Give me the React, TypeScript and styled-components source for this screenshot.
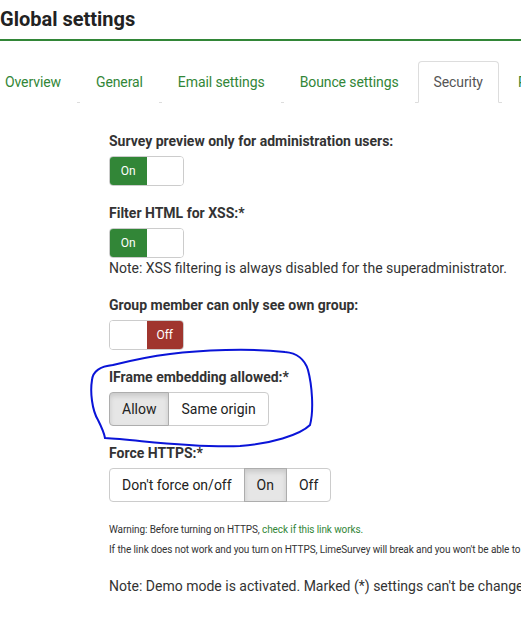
import React from 'react';
import styled, { createGlobalStyle } from 'styled-components';

const GlobalStyle = createGlobalStyle`
  body {
    margin: 0;
    background: #fff;
    font-family: Roboto, "Liberation Sans", sans-serif;
    color: #333;
  }
`;

const tabs = ['Overview', 'General', 'Email settings', 'Bounce settings', 'Security', 'Presentation'];

export default function App() {
  return (
    <Page>
      <GlobalStyle />
      <Header>Global settings</Header>
      <Tabs>
        {tabs.map((t) => (
          <Tab key={t} $active={t === 'Security'}>
            {t}
          </Tab>
        ))}
      </Tabs>
      <Content>
        <Field>
          <Label>Survey preview only for administration users:</Label>
          <Toggle>
            <ToggleHalf $state="on">On</ToggleHalf>
            <ToggleHalf />
          </Toggle>
        </Field>
        <Field>
          <Label>Filter HTML for XSS:*</Label>
          <Toggle>
            <ToggleHalf $state="on">On</ToggleHalf>
            <ToggleHalf />
          </Toggle>
          <Note>Note: XSS filtering is always disabled for the superadministrator.</Note>
        </Field>
        <Field>
          <Label>Group member can only see own group:</Label>
          <Toggle>
            <ToggleHalf />
            <ToggleHalf $state="off">Off</ToggleHalf>
          </Toggle>
        </Field>
        <Field>
          <Label>IFrame embedding allowed:*</Label>
          <ButtonGroup>
            <GroupButton $active>Allow</GroupButton>
            <GroupButton>Same origin</GroupButton>
          </ButtonGroup>
        </Field>
        <Field>
          <Label>Force HTTPS:*</Label>
          <ButtonGroup>
            <GroupButton>Don't force on/off</GroupButton>
            <GroupButton $active>On</GroupButton>
            <GroupButton>Off</GroupButton>
          </ButtonGroup>
        </Field>
        <Warning>
          <SmallText>
            Warning: Before turning on HTTPS, <GreenLink>check if this link works.</GreenLink>
          </SmallText>
          <SmallText>
            If the link does not work and you turn on HTTPS, LimeSurvey will break and you won't be able to access it.
          </SmallText>
        </Warning>
        <DemoNote>Note: Demo mode is activated. Marked (*) settings can't be changed.</DemoNote>
      </Content>
      <Scribble viewBox="0 0 521 628">
        <path
          d="M 113 365 C 103 366, 93 370, 92 380 C 90 392, 92 410, 98 420 C 102 428, 104 432, 105 438
             C 140 440, 190 448, 240 446 C 270 444, 300 435, 310 425 C 314 410, 312 385, 308 370
             C 305 360, 297 353, 285 352 C 250 348, 200 350, 170 354 C 145 357, 125 362, 113 365"
          fill="none"
          stroke="#0a14d8"
          strokeWidth="2"
          strokeLinecap="round"
        />
      </Scribble>
    </Page>
  );
}

const Page = styled.div`
  position: relative;
  width: 521px;
  height: 628px;
  overflow: hidden;
`;

const Header = styled.h1`
  margin: 0;
  padding: 7px 0 7px 0;
  font-size: 20px;
  line-height: 25px;
  font-weight: 700;
  color: #222;
  border-bottom: 2px solid #328637;
  white-space: nowrap;
`;

const Tabs = styled.div`
  display: flex;
  margin: 20px 0 0 -11px;
  border-bottom: 1px solid #ddd;
  white-space: nowrap;
`;

const Tab = styled.div<{ $active?: boolean }>`
  flex: none;
  margin: 0 3px -1px 0;
  padding: 10px 15px;
  font-size: 14px;
  line-height: 20px;
  letter-spacing: -0.1px;
  border: 1px solid ${(p) => (p.$active ? '#ddd' : 'transparent')};
  border-bottom-color: ${(p) => (p.$active ? '#fff' : 'transparent')};
  border-radius: 4px 4px 0 0;
  background: #fff;
  color: ${(p) => (p.$active ? '#555' : '#328637')};
`;

const Content = styled.div`
  display: flex;
  flex-direction: column;
  padding: 28px 0 0 109px;
  white-space: nowrap;
`;

const Field = styled.div`
  display: flex;
  flex-direction: column;
  align-items: flex-start;
  margin-bottom: 17px;
`;

const Label = styled.div`
  font-size: 14px;
  line-height: 20px;
  font-weight: 700;
  color: #333;
  margin-bottom: 5px;
`;

const Toggle = styled.div`
  display: flex;
  width: 75px;
  height: 30px;
  box-sizing: border-box;
  border: 1px solid #ccc;
  border-radius: 4px;
  overflow: hidden;
`;

const ToggleHalf = styled.div<{ $state?: 'on' | 'off' }>`
  flex: 1;
  display: flex;
  align-items: center;
  justify-content: center;
  font-size: 12px;
  color: #fff;
  background: ${(p) => (p.$state === 'on' ? '#328637' : p.$state === 'off' ? '#a0352e' : '#fff')};
`;

const Note = styled.div`
  font-size: 14px;
  line-height: 20px;
  color: #333;
`;

const ButtonGroup = styled.div`
  display: flex;
`;

const GroupButton = styled.div<{ $active?: boolean }>`
  padding: 6px 12px;
  font-size: 14px;
  line-height: 20px;
  color: #222;
  background: ${(p) => (p.$active ? '#e6e6e6' : '#fff')};
  border: 1px solid ${(p) => (p.$active ? '#adadad' : '#ccc')};
  box-shadow: ${(p) => (p.$active ? 'inset 0 3px 5px rgba(0, 0, 0, 0.125)' : 'none')};
  margin-left: -1px;
  position: relative;
  z-index: ${(p) => (p.$active ? 1 : 0)};

  &:first-child {
    margin-left: 0;
    border-radius: 4px 0 0 4px;
  }
  &:last-child {
    border-radius: 0 4px 4px 0;
  }
`;

const Warning = styled.div`
  margin-top: 4px;
`;

const SmallText = styled.p`
  margin: 0 0 6px;
  font-size: 10px;
  line-height: 14px;
  letter-spacing: -0.1px;
  color: #333;
`;

const GreenLink = styled.span`
  color: #328637;
`;

const DemoNote = styled.p`
  margin: 13px 0 0;
  font-size: 14px;
  line-height: 20px;
  color: #333;
`;

const Scribble = styled.svg`
  position: absolute;
  left: 0;
  top: 0;
  width: 521px;
  height: 628px;
  pointer-events: none;
`;
